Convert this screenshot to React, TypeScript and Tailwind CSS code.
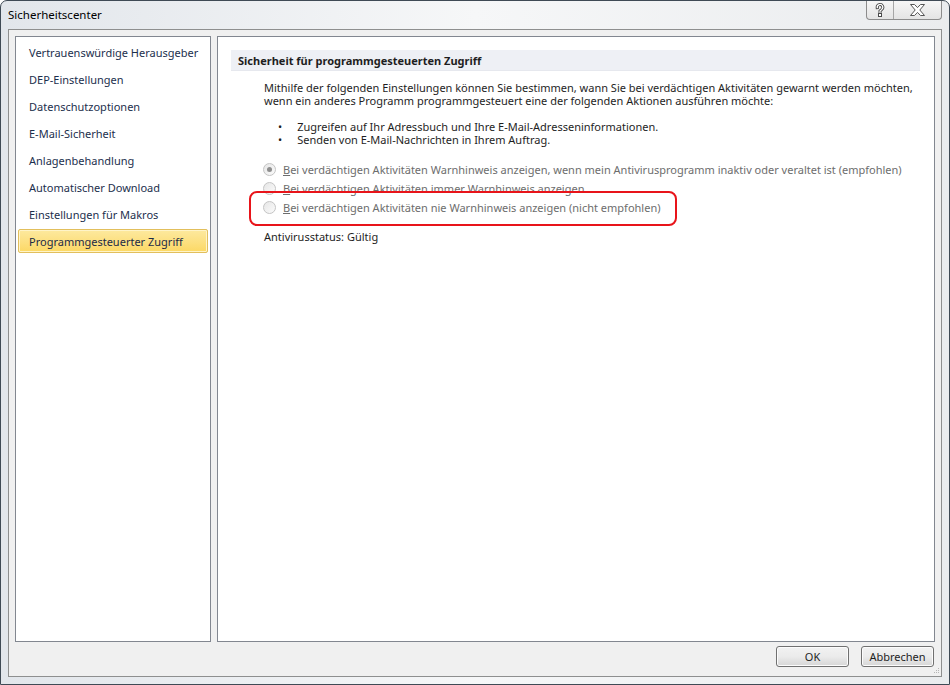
import React from 'react';

const NAV = [
  'Vertrauenswürdige Herausgeber',
  'DEP-Einstellungen',
  'Datenschutzoptionen',
  'E-Mail-Sicherheit',
  'Anlagenbehandlung',
  'Automatischer Download',
  'Einstellungen für Makros',
  'Programmgesteuerter Zugriff',
];

const FONT = { fontFamily: '"Noto Sans", "Open Sans", sans-serif' };

function Radio({ checked }: { checked?: boolean }) {
  return (
    <span className="flex h-[13px] w-[13px] shrink-0 items-center justify-center rounded-full border border-[#c4c4c4] bg-gradient-to-br from-[#e6e6e6] to-[#fbfbfb]">
      {checked && <span className="h-[5px] w-[5px] rounded-full bg-[#8e8e8e]" />}
    </span>
  );
}

function RadioRow({ checked, rest }: { checked?: boolean; rest: string }) {
  return (
    <div className="flex h-[19px] items-center gap-[7px] whitespace-nowrap pl-[32px] text-[#6d6d6d]">
      <Radio checked={checked} />
      <span>
        <span className="underline">B</span>
        {rest}
      </span>
    </div>
  );
}

function Button({ label }: { label: string }) {
  return (
    <button className="flex h-[21px] w-[73px] items-center justify-center rounded-[3px] border border-[#707070] bg-gradient-to-b from-[#f2f2f2] via-[#ebebeb] to-[#d6d6d6] text-[11px] text-[#1e1e1e] shadow-[inset_0_0_0_1px_#fcfcfc]">
      {label}
    </button>
  );
}

export default function App() {
  return (
    <div
      className="relative flex h-[685px] w-[950px] flex-col overflow-hidden rounded-t-[7px] border border-[#3f4a55] bg-gradient-to-r from-[#e2e6eb] via-[#f6f7f8] to-[#eaecee] text-[11px] leading-[13px]"
      style={FONT}
    >
      {/* Title bar */}
      <div className="flex h-[28px] shrink-0 items-center pb-[2px] pl-[7px] text-[11.5px] text-black">
        Sicherheitscenter
      </div>

      {/* Caption buttons */}
      <div className="absolute right-[7px] top-0 flex h-[19px] overflow-hidden rounded-b-[4px] border border-t-0 border-[#8c8c8c] bg-gradient-to-b from-[#f6f6f6] to-[#e4e4e4]">
        <div className="flex w-[27px] items-center justify-center border-r border-[#a6a6a6]">
          <svg width="10" height="14" viewBox="0 0 10 14">
            <path d="M2.2 4.6 A2.8 2.8 0 1 1 6.6 6.6 L5 8 V9.4" fill="none" stroke="#4a4a4a" strokeWidth="3" strokeLinecap="square" />
            <path d="M2.2 4.6 A2.8 2.8 0 1 1 6.6 6.6 L5 8 V9.4" fill="none" stroke="#ffffff" strokeWidth="1.2" strokeLinecap="square" />
            <rect x="3.5" y="10.5" width="3" height="3" fill="#ffffff" stroke="#4a4a4a" strokeWidth="1" />
          </svg>
        </div>
        <div className="flex w-[47px] items-center justify-center">
          <svg width="15" height="12" viewBox="0 0 15 12">
            <polygon
              points="0.5,0.5 4.5,0.5 7.5,3.6 10.5,0.5 14.5,0.5 9.8,6 14.5,11.5 10.5,11.5 7.5,8.4 4.5,11.5 0.5,11.5 5.2,6"
              fill="#ffffff"
              stroke="#555555"
              strokeWidth="1"
            />
          </svg>
        </div>
      </div>

      {/* Client area */}
      <div className="mx-[7px] mb-[7px] flex flex-1 flex-col border border-[#8e8f8f] bg-[#f0f0f0]">
        <div className="flex flex-1 gap-[6px] px-[6px] pt-[6px]">
          {/* Left nav */}
          <div className="flex h-[606px] w-[196px] flex-col gap-[3px] whitespace-nowrap border border-[#828790] bg-white px-[2px] pt-[3px]">
            {NAV.map((item, i) => {
              const active = i === NAV.length - 1;
              return (
                <div
                  key={item}
                  className={
                    active
                      ? 'flex h-[24px] items-center rounded-[2px] border border-[#e2bf5c] bg-gradient-to-b from-[#fde99e] to-[#fcd863] pl-[10px] text-[#1c2a45] shadow-[inset_0_0_0_1px_#fff4c8]'
                      : 'flex h-[24px] items-center pl-[11px] text-[#1c2f4d]'
                  }
                >
                  {item}
                </div>
              );
            })}
          </div>

          {/* Right content */}
          <div className="relative h-[606px] flex-1 border border-[#828790] bg-white pl-[13px] pr-[14px] pt-[13px]">
            <div className="flex h-[21px] items-center border-b border-[#e6e8ee] bg-[#eef0f5] pl-[7px] font-bold text-[#1e1e1e]">
              Sicherheit für programmgesteuerten Zugriff
            </div>

            <div className="whitespace-nowrap pl-[33px] pt-[10px] text-[#1e1e1e]">
              <p>
                Mithilfe der folgenden Einstellungen können Sie bestimmen, wann Sie bei verdächtigen Aktivitäten gewarnt werden möchten,
                <br />
                wenn ein anderes Programm programmgesteuert eine der folgenden Aktionen ausführen möchte:
              </p>
              <ul className="mt-[13px] pl-[14px]">
                <li className="flex gap-[15px]">
                  <span>•</span>
                  <span>Zugreifen auf Ihr Adressbuch und Ihre E-Mail-Adresseninformationen.</span>
                </li>
                <li className="flex gap-[15px]">
                  <span>•</span>
                  <span>Senden von E-Mail-Nachrichten in Ihrem Auftrag.</span>
                </li>
              </ul>
            </div>

            <div className="mt-[14px] flex flex-col">
              <RadioRow checked rest="ei verdächtigen Aktivitäten Warnhinweis anzeigen, wenn mein Antivirusprogramm inaktiv oder veraltet ist (empfohlen)" />
              <RadioRow rest="ei verdächtigen Aktivitäten immer Warnhinweis anzeigen" />
              <RadioRow rest="ei verdächtigen Aktivitäten nie Warnhinweis anzeigen (nicht empfohlen)" />
            </div>

            <div className="mt-[13px] pl-[33px] text-[#1e1e1e]">Antivirusstatus: Gültig</div>

            {/* Red annotation */}
            <div className="pointer-events-none absolute left-[31px] top-[154px] h-[35px] w-[428px] rounded-[8px] border-2 border-[#e8141a]" />
          </div>
        </div>

        {/* Buttons */}
        <div className="flex items-center justify-end gap-[12px] pb-[9px] pr-[7px] pt-[4px]">
          <Button label="OK" />
          <Button label="Abbrechen" />
        </div>

        {/* Size grip */}
        <svg className="absolute bottom-[9px] right-[9px]" width="7" height="7" viewBox="0 0 7 7">
          <rect x="5" y="0" width="1" height="1" fill="#b5b5b5" />
          <rect x="3" y="2" width="1" height="1" fill="#b5b5b5" />
          <rect x="5" y="2" width="1" height="1" fill="#b5b5b5" />
          <rect x="1" y="4" width="1" height="1" fill="#b5b5b5" />
          <rect x="3" y="4" width="1" height="1" fill="#b5b5b5" />
          <rect x="5" y="4" width="1" height="1" fill="#b5b5b5" />
        </svg>
      </div>
    </div>
  );
}
